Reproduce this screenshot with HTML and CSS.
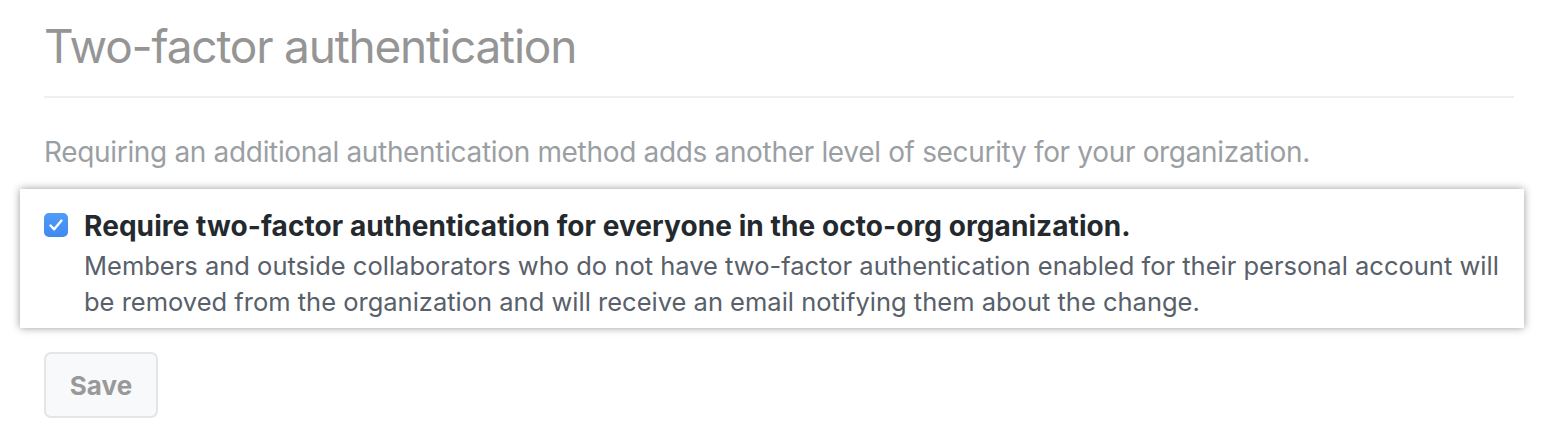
FILE: index.html
```html
<!DOCTYPE html>
<html lang="en">
<head>
<meta charset="utf-8">
<title>Two-factor authentication</title>
<link rel="stylesheet" href="styles.css">
</head>
<body>
<div class="page">
  <div class="subhead">
    <h2 class="subhead-heading">Two-factor authentication</h2>
  </div>
  <p class="intro">Requiring an additional authentication method adds another level of security for your organization.</p>
  <div class="option-box">
    <label class="option">
      <span class="checkbox">
        <svg viewBox="0 0 24 24" width="24" height="24" aria-hidden="true"><path d="M6.5 12.5 L10.2 16.3 L17.5 7.6" fill="none" stroke="#fff" stroke-width="2.4" stroke-linecap="round" stroke-linejoin="round"/></svg>
      </span>
      <span class="option-text">
        <span class="option-title">Require two-factor authentication for everyone in the octo-org organization.</span>
        <span class="option-note">Members and outside collaborators who do not have two-factor authentication enabled for their personal account will be removed from the organization and will receive an email notifying them about the change.</span>
      </span>
    </label>
  </div>
  <button class="btn" type="button">Save</button>
</div>
</body>
</html>
```

FILE: styles.css
```css
html, body {
  margin: 0;
  padding: 0;
  background: #ffffff;
}

.page {
  padding: 0 34px 0 44px;
  font-family: Inter, "Noto Sans", sans-serif;
}

.subhead {
  padding: 16px 0 20px;
  border-bottom: 2px solid #efefef;
}

.subhead-heading {
  margin: 0;
  font-size: 46px;
  line-height: 60px;
  font-weight: 400;
  letter-spacing: -1.2px;
  color: #959595;
}

.intro {
  margin: 34px 0 0;
  font-size: 28px;
  line-height: 40px;
  letter-spacing: -0.33px;
  color: #9b9fa4;
}

.option-box {
  margin: 17px -10px 0 -24px;
  padding: 19px 12px 8px 24px;
  background: #ffffff;
  box-shadow: 0 0 8px rgba(0, 0, 0, 0.4);
}

.option {
  display: flex;
  gap: 16px;
  align-items: flex-start;
}

.checkbox {
  flex: none;
  width: 24px;
  height: 24px;
  margin-top: 5px;
  border-radius: 5px;
  background: linear-gradient(#519bf8, #3f89f2);
  display: flex;
}

.option-text {
  display: flex;
  flex-direction: column;
}

.option-title {
  font-size: 28px;
  line-height: 36px;
  font-weight: 700;
  letter-spacing: 0.08px;
  color: #24292e;
}

.option-note {
  margin-top: 4px;
  font-size: 25.5px;
  line-height: 36px;
  color: #586069;
}

.btn {
  margin-top: 24px;
  width: 114px;
  height: 66px;
  border: 2px solid #e3e5e8;
  border-radius: 7px;
  background: #f8f9fa;
  font-family: Inter, "Noto Sans", sans-serif;
  font-size: 26px;
  font-weight: 700;
  color: #999999;
  padding: 0;
}
```
